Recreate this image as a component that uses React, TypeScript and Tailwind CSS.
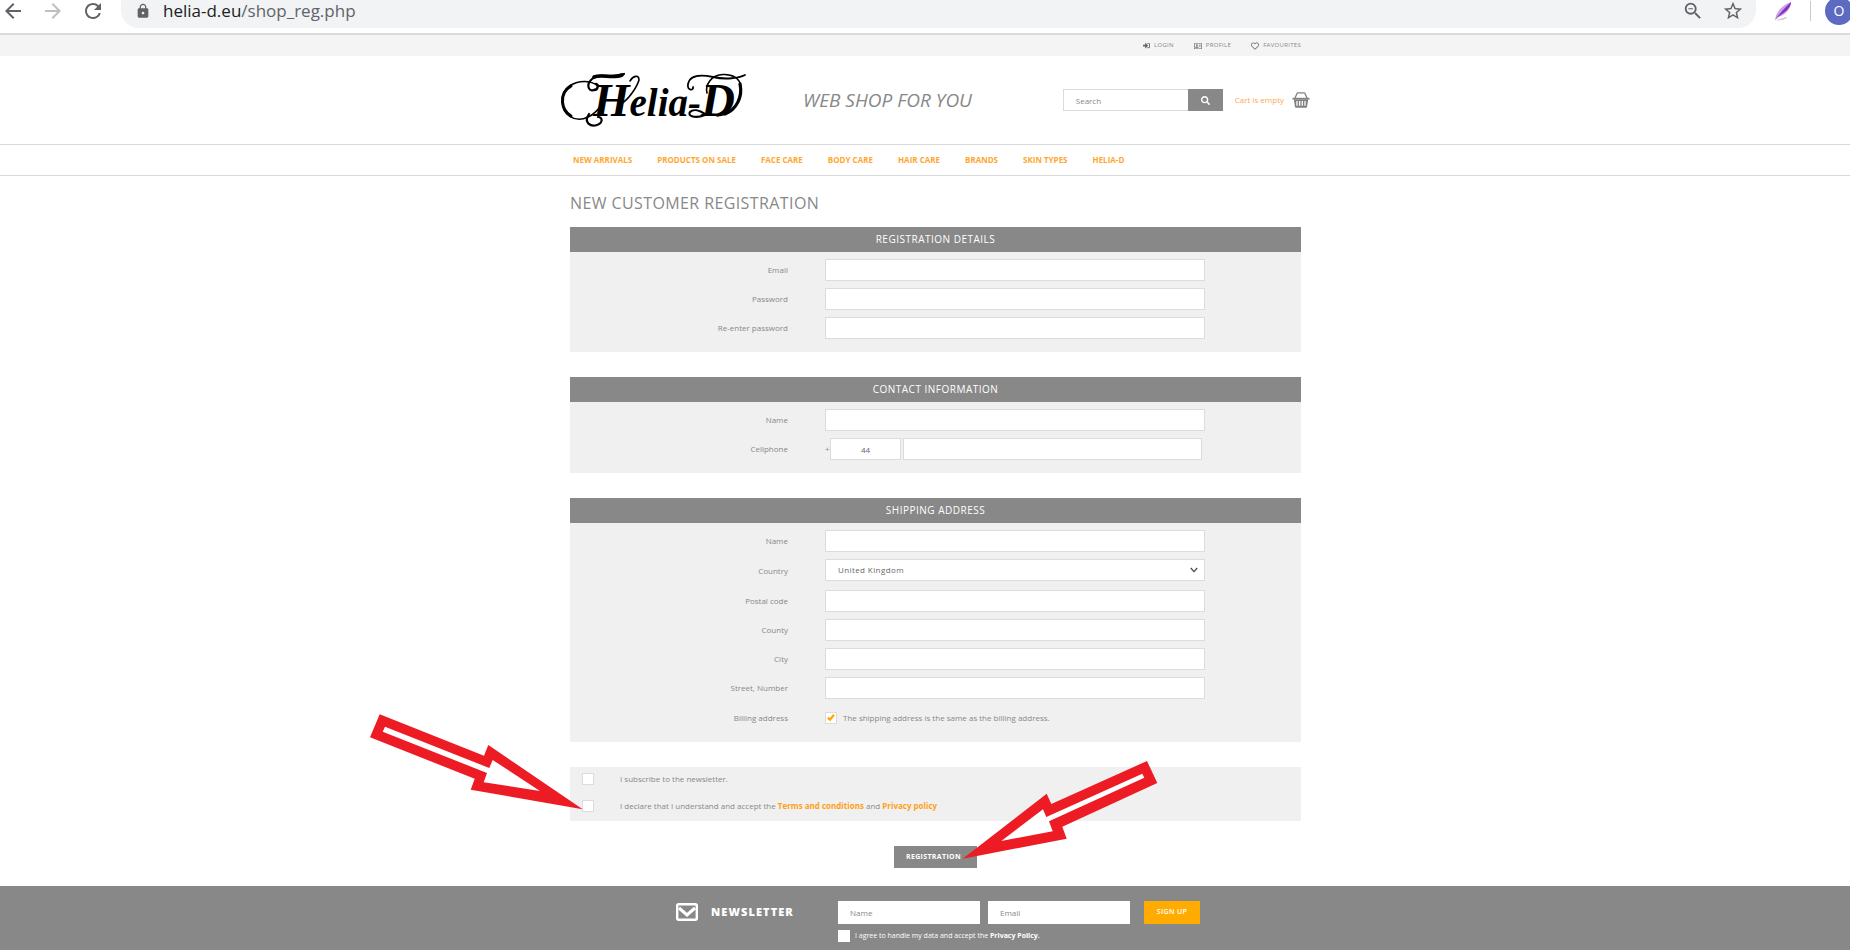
/**
 * Helia-D web shop – new customer registration page
 * Browser bar, shop header, registration form and newsletter footer.
 */

import React from "react";
import {
  MdArrowBack,
  MdArrowForward,
  MdLock,
  MdRefresh,
  MdStarBorder,
  MdZoomOut,
} from "react-icons/md";
import { FaRegAddressCard, FaRegHeart, FaSearch, FaSignInAlt } from "react-icons/fa";

const NAV_ITEMS = [
  "NEW ARRIVALS",
  "PRODUCTS ON SALE",
  "FACE CARE",
  "BODY CARE",
  "HAIR CARE",
  "BRANDS",
  "SKIN TYPES",
  "HELIA-D",
];

const INPUT =
  "h-[22px] w-full border border-[#dcdcdc] bg-white px-3 text-[8px] text-[#666] outline-none";

function BrowserBar() {
  return (
    <div className="flex h-[35px] items-start overflow-hidden border-b-2 border-[#dadada] bg-white">
      <div className="flex h-[21px] flex-1 items-center">
        <div className="flex w-[121px] shrink-0 items-center gap-4 pl-px text-[#5f6368]">
          <button type="button" aria-label="Back">
            <MdArrowBack className="size-6" />
          </button>
          <button type="button" aria-label="Forward" className="text-[#bdbfc1]">
            <MdArrowForward className="size-6" />
          </button>
          <button type="button" aria-label="Reload">
            <MdRefresh className="size-6" />
          </button>
        </div>
        <div className="flex h-[28px] min-w-0 flex-1 items-start self-start rounded-b-[18px] bg-[#f1f3f4]">
          <div className="flex h-[21px] flex-1 items-center px-3 text-[#5f6368]">
            <MdLock className="ml-0.5 size-4" />
            <span className="ml-3 text-[17px] leading-5">
              <span className="text-[#202124]">helia-d.eu</span>/shop_reg.php
            </span>
            <button type="button" aria-label="Zoom" className="ml-auto">
              <MdZoomOut className="size-[22px]" />
            </button>
            <button type="button" aria-label="Bookmark" className="ml-[18px]">
              <MdStarBorder className="size-[22px]" />
            </button>
          </div>
        </div>
        <svg viewBox="0 0 18 20" className="ml-[18px] h-5 w-[18px]" aria-hidden="true">
          <path d="M2 19.5 Q9 19.5 13 17 L12 16 Q6 18 2 19.5Z" fill="#c9c9c9" />
          <path d="M1 19 C2 11 8 4 17 1 C17 7 12 14 4 16 Z" fill="#c9a0e6" />
          <path d="M1 19 C5 13 10 8 17 1 C17 6 13 10 4 16 Z" fill="#8430bd" />
        </svg>
        <div className="ml-[18px] h-5 w-px bg-[#c8cacc]" />
        <div className="ml-3.5 w-[25px] overflow-visible">
          <div className="flex size-7 items-center justify-center rounded-full bg-[#5c6bc0] text-[14px] text-white">
            O
          </div>
        </div>
      </div>
    </div>
  );
}

function Logo() {
  return (
    <svg
      viewBox="0 0 185 54"
      className="h-[54px] w-[185px] shrink-0 overflow-visible"
      role="img"
      aria-label="Helia-D"
    >
      <text
        x="32"
        y="43"
        fontWeight="700"
        fontStyle="italic"
        fontFamily="'Liberation Serif', serif"
      >
        <tspan fontSize="47">H</tspan>
        <tspan fontSize="39">elia-</tspan>
        <tspan fontSize="47">D</tspan>
      </text>
      <g fill="none" stroke="#000" strokeLinecap="round">
        {/* big loop on the left, running under the first letter */}
        <path d="M38 13 C24 4 3 9 1.5 26 C0 43 15 50 27 44 C34 41 38 36 42 30" strokeWidth="1.6" />
        <path d="M10 13 C3 17 1 22 1.5 29 C2 35 5 40 10 43" strokeWidth="3" />
        {/* top swash with its curl */}
        <path d="M33 17 C27 19 25 11 31 6 C38 -1 50 6 63 1" strokeWidth="2.2" />
        <path d="M33 4 C41 1 52 6 61 2" strokeWidth="3.6" />
        <path d="M33 17 C37 17 38 12 35 11" strokeWidth="2.4" />
        {/* curl at the foot */}
        <path d="M28 41 C22 50 30 54 36 52 C42 50 42 44 37 44" strokeWidth="2.2" />
        {/* hairline swinging out of the first letter */}
        <path d="M60 31 C68 26 76 14 78 7 C78 1 72 3 69 8" strokeWidth="1.6" />
        {/* curls round the last letter */}
        <path d="M132 14 C133 18 126 18 127 11 C129 1 142 2 152 4 C165 7 178 5 184 2" strokeWidth="1.8" />
        <path d="M146 20 C144 12 150 2 162 1.5 C171 1 179 5 180 14 C181 28 172 42 156 43" strokeWidth="1.6" />
        <path d="M179 11 C182 24 175 37 164 41" strokeWidth="3.2" />
        <path d="M144 42 C134 46 126 43 129 39 C132 36 138 37 144 41" strokeWidth="2.2" />
      </g>
    </svg>
  );
}

function BasketIcon() {
  return (
    <svg viewBox="0 0 18 16" className="h-4 w-[18px] text-[#808080]" aria-hidden="true">
      <path d="M3 6 L5 1.5 Q5.3 .8 6 .8 H12 Q12.7 .8 13 1.5 L15 6" fill="none" stroke="currentColor" strokeWidth="1.3" />
      <path d="M.5 5.8 H17.5 V7.6 H.5Z" fill="currentColor" />
      <path d="M1.8 7.6 H16.2 L15 15 Q14.9 15.7 14 15.7 H4 Q3.1 15.7 3 15Z" fill="currentColor" />
      <path d="M5 9 V13.8 M7.7 9 V13.8 M10.3 9 V13.8 M13 9 V13.8" stroke="#fff" strokeWidth="1.3" />
    </svg>
  );
}

function Header() {
  return (
    <header>
      <div className="bg-[#f4f4f4] pl-[21px]">
        <div className="mx-auto flex h-[21px] w-full max-w-[731px] items-center justify-end gap-5 text-[6px] tracking-wider text-[#888]">
          <a href="#login" className="flex items-center gap-1">
            <FaSignInAlt className="size-[7px] text-[#666]" /> LOGIN
          </a>
          <a href="#profile" className="flex items-center gap-1">
            <FaRegAddressCard className="size-2 text-[#666]" /> PROFILE
          </a>
          <a href="#favourites" className="flex items-center gap-1">
            <FaRegHeart className="size-2 text-[#666]" /> FAVOURITES
          </a>
        </div>
      </div>

      <div className="pl-[21px]">
        <div className="mx-auto flex h-[88px] w-full max-w-[749px] items-center">
          <Logo />
          <p className="ml-[57px] text-[19px] leading-6 italic whitespace-nowrap text-[#888]">WEB SHOP FOR YOU</p>
          <form className="ml-auto flex" onSubmit={(e) => e.preventDefault()}>
            <input
              type="text"
              aria-label="Search"
              placeholder="Search"
              className="h-[22px] w-[125px] border border-r-0 border-[#dcdcdc] px-3 text-[8px] outline-none placeholder:text-[#888]"
            />
            <button
              type="submit"
              aria-label="Search"
              className="flex h-[22px] w-[35px] items-center justify-center bg-[#888] text-white"
            >
              <FaSearch className="size-[9px]" />
            </button>
          </form>
          <a href="#cart" className="ml-3 flex items-center gap-2 text-[8px] whitespace-nowrap text-[#ffa64d]">
            Cart is empty
            <BasketIcon />
          </a>
        </div>
      </div>

      <nav className="border-y border-[#dadada] pl-[21px]">
        <ul className="mx-auto flex h-[30px] w-full max-w-[731px] items-center gap-[25px] pl-[3px] text-[8px] leading-3 font-bold text-[#ffa630]">
          {NAV_ITEMS.map((item) => (
            <li key={item}>
              <a href="#shop">{item}</a>
            </li>
          ))}
        </ul>
      </nav>
    </header>
  );
}

function Section({ title, children }: { title: string; children: React.ReactNode }) {
  return (
    <section className="mb-[25px] bg-[#f0f0f0]">
      <h2 className="h-[25px] bg-[#888] text-center text-[10px] leading-[25px] font-medium tracking-wider text-white">
        {title}
      </h2>
      <div className="flex flex-col gap-[7px] pt-[7px] pb-[13px]">{children}</div>
    </section>
  );
}

function Row({ label, id, children }: { label: string; id: string; children?: React.ReactNode }) {
  return (
    <div className="grid grid-cols-[218px_380px] items-center gap-x-[37px]">
      <label htmlFor={id} className="text-right text-[8px] leading-3 text-[#888]">
        {label}
      </label>
      {children ?? (
        <input id={id} type={id.includes("password") ? "password" : "text"} className={INPUT} />
      )}
    </div>
  );
}

function RegistrationForm() {
  const [sameAddress, setSameAddress] = React.useState(true);

  return (
    <form onSubmit={(e) => e.preventDefault()}>
      <Section title="REGISTRATION DETAILS">
        <Row label="Email" id="email" />
        <Row label="Password" id="password" />
        <Row label="Re-enter password" id="password-again" />
      </Section>

      <Section title="CONTACT INFORMATION">
        <Row label="Name" id="contact-name" />
        <Row label="Cellphone" id="phone">
          <div className="flex items-center pr-[3px] text-[8px] text-[#888]">
            <span className="w-[5px] shrink-0">+</span>
            <input
              type="text"
              aria-label="Country code"
              defaultValue="44"
              className="h-[22px] w-[71px] border border-[#dcdcdc] bg-white text-center text-[8px] text-[#666] outline-none"
            />
            <input
              id="phone"
              type="text"
              className="ml-0.5 h-[22px] min-w-0 flex-1 border border-[#dcdcdc] bg-white px-3 text-[8px] outline-none"
            />
          </div>
        </Row>
      </Section>

      <Section title="SHIPPING ADDRESS">
        <Row label="Name" id="shipping-name" />
        <Row label="Country" id="country">
          <div className="relative h-6">
            <select
              id="country"
              className="block h-[22px] w-full appearance-none border border-[#dcdcdc] bg-white px-3 text-[8px] tracking-wider text-[#666] outline-none"
            >
              <option>United Kingdom</option>
            </select>
            <svg
              viewBox="0 0 8 6"
              className="pointer-events-none absolute top-2 right-[7px] h-1.5 w-2"
              aria-hidden="true"
            >
              <path d="M.8 1 L4 4.6 L7.2 1" fill="none" stroke="#444" strokeWidth="1.2" />
            </svg>
          </div>
        </Row>
        <Row label="Postal code" id="postal-code" />
        <Row label="County" id="county" />
        <Row label="City" id="city" />
        <Row label="Street, Number" id="street" />
        <Row label="Billing address" id="billing">
          <div className="flex h-[23px] items-center gap-1.5 text-[8px] text-[#888]">
            <span className="relative size-3">
              <input
                id="billing"
                type="checkbox"
                checked={sameAddress}
                onChange={(e) => setSameAddress(e.target.checked)}
                className="block size-3 appearance-none border border-[#dcdcdc] bg-white"
              />
              {sameAddress && (
                <svg viewBox="0 0 12 12" className="pointer-events-none absolute inset-0 size-3" aria-hidden="true">
                  <path d="M2.8 5.6 L5 7.6 L9 2.8" fill="none" stroke="#ffa500" strokeWidth="2.2" />
                </svg>
              )}
            </span>
            <span>The shipping address is the same as the billing address.</span>
          </div>
        </Row>
      </Section>

      <div className="relative mb-[25px] flex h-[54px] flex-col gap-[15px] bg-[#f0f0f0] pt-1.5 pl-3 text-[8px] leading-3 text-[#888]">
        <label className="flex items-center gap-[26px]">
          <input type="checkbox" className="size-3 appearance-none border border-[#dcdcdc] bg-white" />
          I subscribe to the newsletter.
        </label>
        <label className="flex items-center gap-[26px]">
          <input type="checkbox" className="size-3 appearance-none border border-[#dcdcdc] bg-white" />
          <span>
            I declare that I understand and accept the{" "}
            <a href="#terms" className="font-bold text-[#ffa115]">
              Terms and conditions
            </a>{" "}
            and{" "}
            <a href="#privacy" className="font-bold text-[#ffa115]">
              Privacy policy
            </a>
          </span>
        </label>
        {/* pointer to the terms checkbox */}
        <svg
          viewBox="0 0 213 96"
          className="pointer-events-none absolute -top-[53px] -left-[200px] h-24 w-[213px]"
          aria-hidden="true"
        >
          <path d="M9.7 .3 L114 41.7 L118.3 31 L212.7 95.3 L100.7 75.7 L104.7 64.7 L0 23.3Z" fill="#ed1c24" />
          <path d="M15 12.7 L119.3 54 L122.7 46 L170 77 L113.7 68.3 L117 59 L12.7 17.7Z" fill="#fff" />
        </svg>
      </div>

      <div className="flex justify-center">
        <div className="relative">
          <button
            type="submit"
            className="block h-[22px] w-[83px] bg-[#888] pr-1 text-[7px] leading-[22px] font-bold tracking-wider text-white"
          >
            REGISTRATION
          </button>
          {/* pointer to the submit button */}
          <svg
            viewBox="0 0 196 99"
            className="pointer-events-none absolute -top-[86px] left-[68px] h-[99px] w-[196px]"
            aria-hidden="true"
          >
            <path d="M185 1 L195.3 23 L100.3 66.7 L104.7 78.7 L.7 98.7 L84.7 33.7 L89.3 44Z" fill="#ed1c24" />
            <path d="M180.3 13.7 L182.3 17.7 L87 61.3 L90.7 71.3 L39.3 81 L81 49.3 L84.3 57Z" fill="#fff" />
          </svg>
        </div>
      </div>
    </form>
  );
}

function NewsletterFooter() {
  return (
    <footer className="mt-[18px] bg-[#888] pl-[21px] text-white">
      <div className="mx-auto flex w-full max-w-[731px] items-start pt-[15px] pb-2 pl-[106px]">
        <svg viewBox="0 0 22 18" className="mt-0.5 h-[18px] w-[22px] shrink-0" aria-hidden="true">
          <rect x="1.2" y="1.2" width="19.6" height="15.6" rx="1.5" fill="none" stroke="#fff" strokeWidth="2.4" />
          <path d="M3 5 L11 12 L19 5" fill="none" stroke="#fff" strokeWidth="3" />
        </svg>
        <h2 className="ml-[13px] w-[127px] shrink-0 text-[11px] leading-[22px] font-extrabold tracking-widest">
          NEWSLETTER
        </h2>
        <form onSubmit={(e) => e.preventDefault()}>
          <div className="flex">
            <input
              type="text"
              aria-label="Name"
              placeholder="Name"
              className="h-[23px] w-[142px] bg-white px-3 text-[8px] text-[#666] outline-none placeholder:text-[#888]"
            />
            <input
              type="email"
              aria-label="Email"
              placeholder="Email"
              className="ml-2 h-[23px] w-[142px] bg-white px-3 text-[8px] text-[#666] outline-none placeholder:text-[#888]"
            />
            <button
              type="submit"
              className="ml-3.5 h-[23px] w-14 bg-[#ffab00] text-[7px] font-semibold tracking-wider text-white"
            >
              SIGN UP
            </button>
          </div>
          <label className="mt-1.5 flex items-center gap-[5px] text-[7px] leading-3">
            <input type="checkbox" className="size-3 appearance-none bg-white" />
            <span>
              I agree to handle my data and accept the{" "}
              <a href="#privacy" className="font-bold">
                Privacy Policy.
              </a>
            </span>
          </label>
        </form>
      </div>
    </footer>
  );
}

export default function App() {
  return (
    <div className="overflow-hidden bg-white font-['Open_Sans','Noto_Sans',sans-serif]">
      <BrowserBar />
      <Header />
      <main className="pl-[21px]">
        <div className="mx-auto w-full max-w-[731px] pt-[15px]">
          <h1 className="mb-3 text-[16px] leading-6 tracking-wide text-[#888]">
            NEW CUSTOMER REGISTRATION
          </h1>
          <RegistrationForm />
        </div>
      </main>
      <NewsletterFooter />
    </div>
  );
}
